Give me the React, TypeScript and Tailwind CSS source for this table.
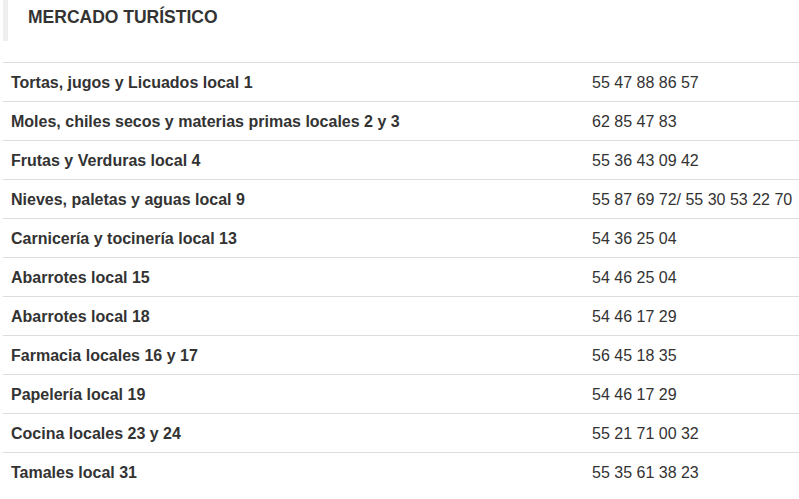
import React from 'react';

interface Local {
  name: string;
  phone: string;
}

const locales: Local[] = [
  { name: 'Tortas, jugos y Licuados local 1', phone: '55 47 88 86 57' },
  { name: 'Moles, chiles secos y materias primas locales 2 y 3', phone: '62 85 47 83' },
  { name: 'Frutas y Verduras local 4', phone: '55 36 43 09 42' },
  { name: 'Nieves, paletas y aguas local 9', phone: '55 87 69 72/ 55 30 53 22 70' },
  { name: 'Carnicería y tocinería local 13', phone: '54 36 25 04' },
  { name: 'Abarrotes local 15', phone: '54 46 25 04' },
  { name: 'Abarrotes local 18', phone: '54 46 17 29' },
  { name: 'Farmacia locales 16 y 17', phone: '56 45 18 35' },
  { name: 'Papelería local 19', phone: '54 46 17 29' },
  { name: 'Cocina locales 23 y 24', phone: '55 21 71 00 32' },
  { name: 'Tamales local 31', phone: '55 35 61 38 23' },
];

export default function App() {
  return (
    <div className="min-h-screen bg-white pl-[3px] text-[#333] font-['Liberation_Sans',Arial,sans-serif]">
      {/* Section title */}
      <div className="border-l-[5px] border-[#eee] pl-[20px] pt-[5px] h-[41px]">
        <h2 className="text-[17.5px] leading-[25px] font-bold">MERCADO TURÍSTICO</h2>
      </div>

      <table className="mt-[21px] w-full table-fixed border-collapse text-[16px]">
        <colgroup>
          <col className="w-[581px]" />
          <col />
        </colgroup>
        <tbody>
          {locales.map((local, i) => (
            <tr key={i} className="border-t border-[#ddd]">
              <td className="px-[8px] pt-[9px] pb-[7px] leading-[22px] font-bold">{local.name}</td>
              <td className="px-[8px] pt-[9px] pb-[7px] leading-[22px] whitespace-nowrap">{local.phone}</td>
            </tr>
          ))}
        </tbody>
      </table>
    </div>
  );
}
